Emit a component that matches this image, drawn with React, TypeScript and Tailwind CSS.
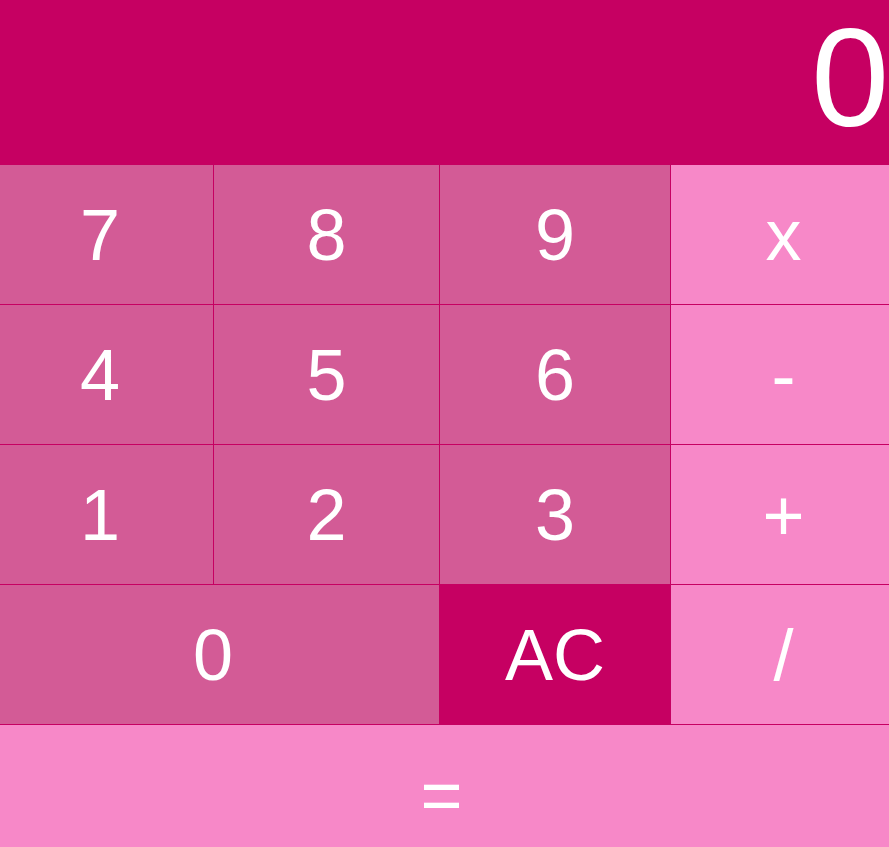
const keys: { label: string; kind: 'num' | 'op' | 'clear'; span?: string }[] = [
  { label: '7', kind: 'num' },
  { label: '8', kind: 'num' },
  { label: '9', kind: 'num' },
  { label: 'x', kind: 'op' },
  { label: '4', kind: 'num' },
  { label: '5', kind: 'num' },
  { label: '6', kind: 'num' },
  { label: '-', kind: 'op' },
  { label: '1', kind: 'num' },
  { label: '2', kind: 'num' },
  { label: '3', kind: 'num' },
  { label: '+', kind: 'op' },
  { label: '0', kind: 'num', span: 'col-span-2' },
  { label: 'AC', kind: 'clear' },
  { label: '/', kind: 'op' },
  { label: '=', kind: 'op', span: 'col-span-4' },
];

const kindClass = {
  num: 'bg-[#d35b96]',
  op: 'bg-[#f788c8]',
  clear: 'bg-[#c60062]',
};

export default function App() {
  return (
    <div className="h-[847px] overflow-hidden bg-[#c60062] font-['Liberation_Sans',Arial,sans-serif] text-white">
      {/* Display */}
      <div className="flex h-[165px] items-end justify-end overflow-hidden">
        <span className="text-[140px] leading-[1.25]">0</span>
      </div>
      {/* Keypad: slightly wider than the window, as in the original */}
      <div className="-ml-[13px] grid w-[909px] grid-cols-[226px_225px_230px_225px] auto-rows-[139px] gap-px">
        {keys.map((k) => (
          <button
            key={k.label}
            className={`flex items-center justify-center text-[72px] leading-none ${kindClass[k.kind]} ${k.span ?? ''}`}
          >
            {k.label}
          </button>
        ))}
      </div>
    </div>
  );
}
